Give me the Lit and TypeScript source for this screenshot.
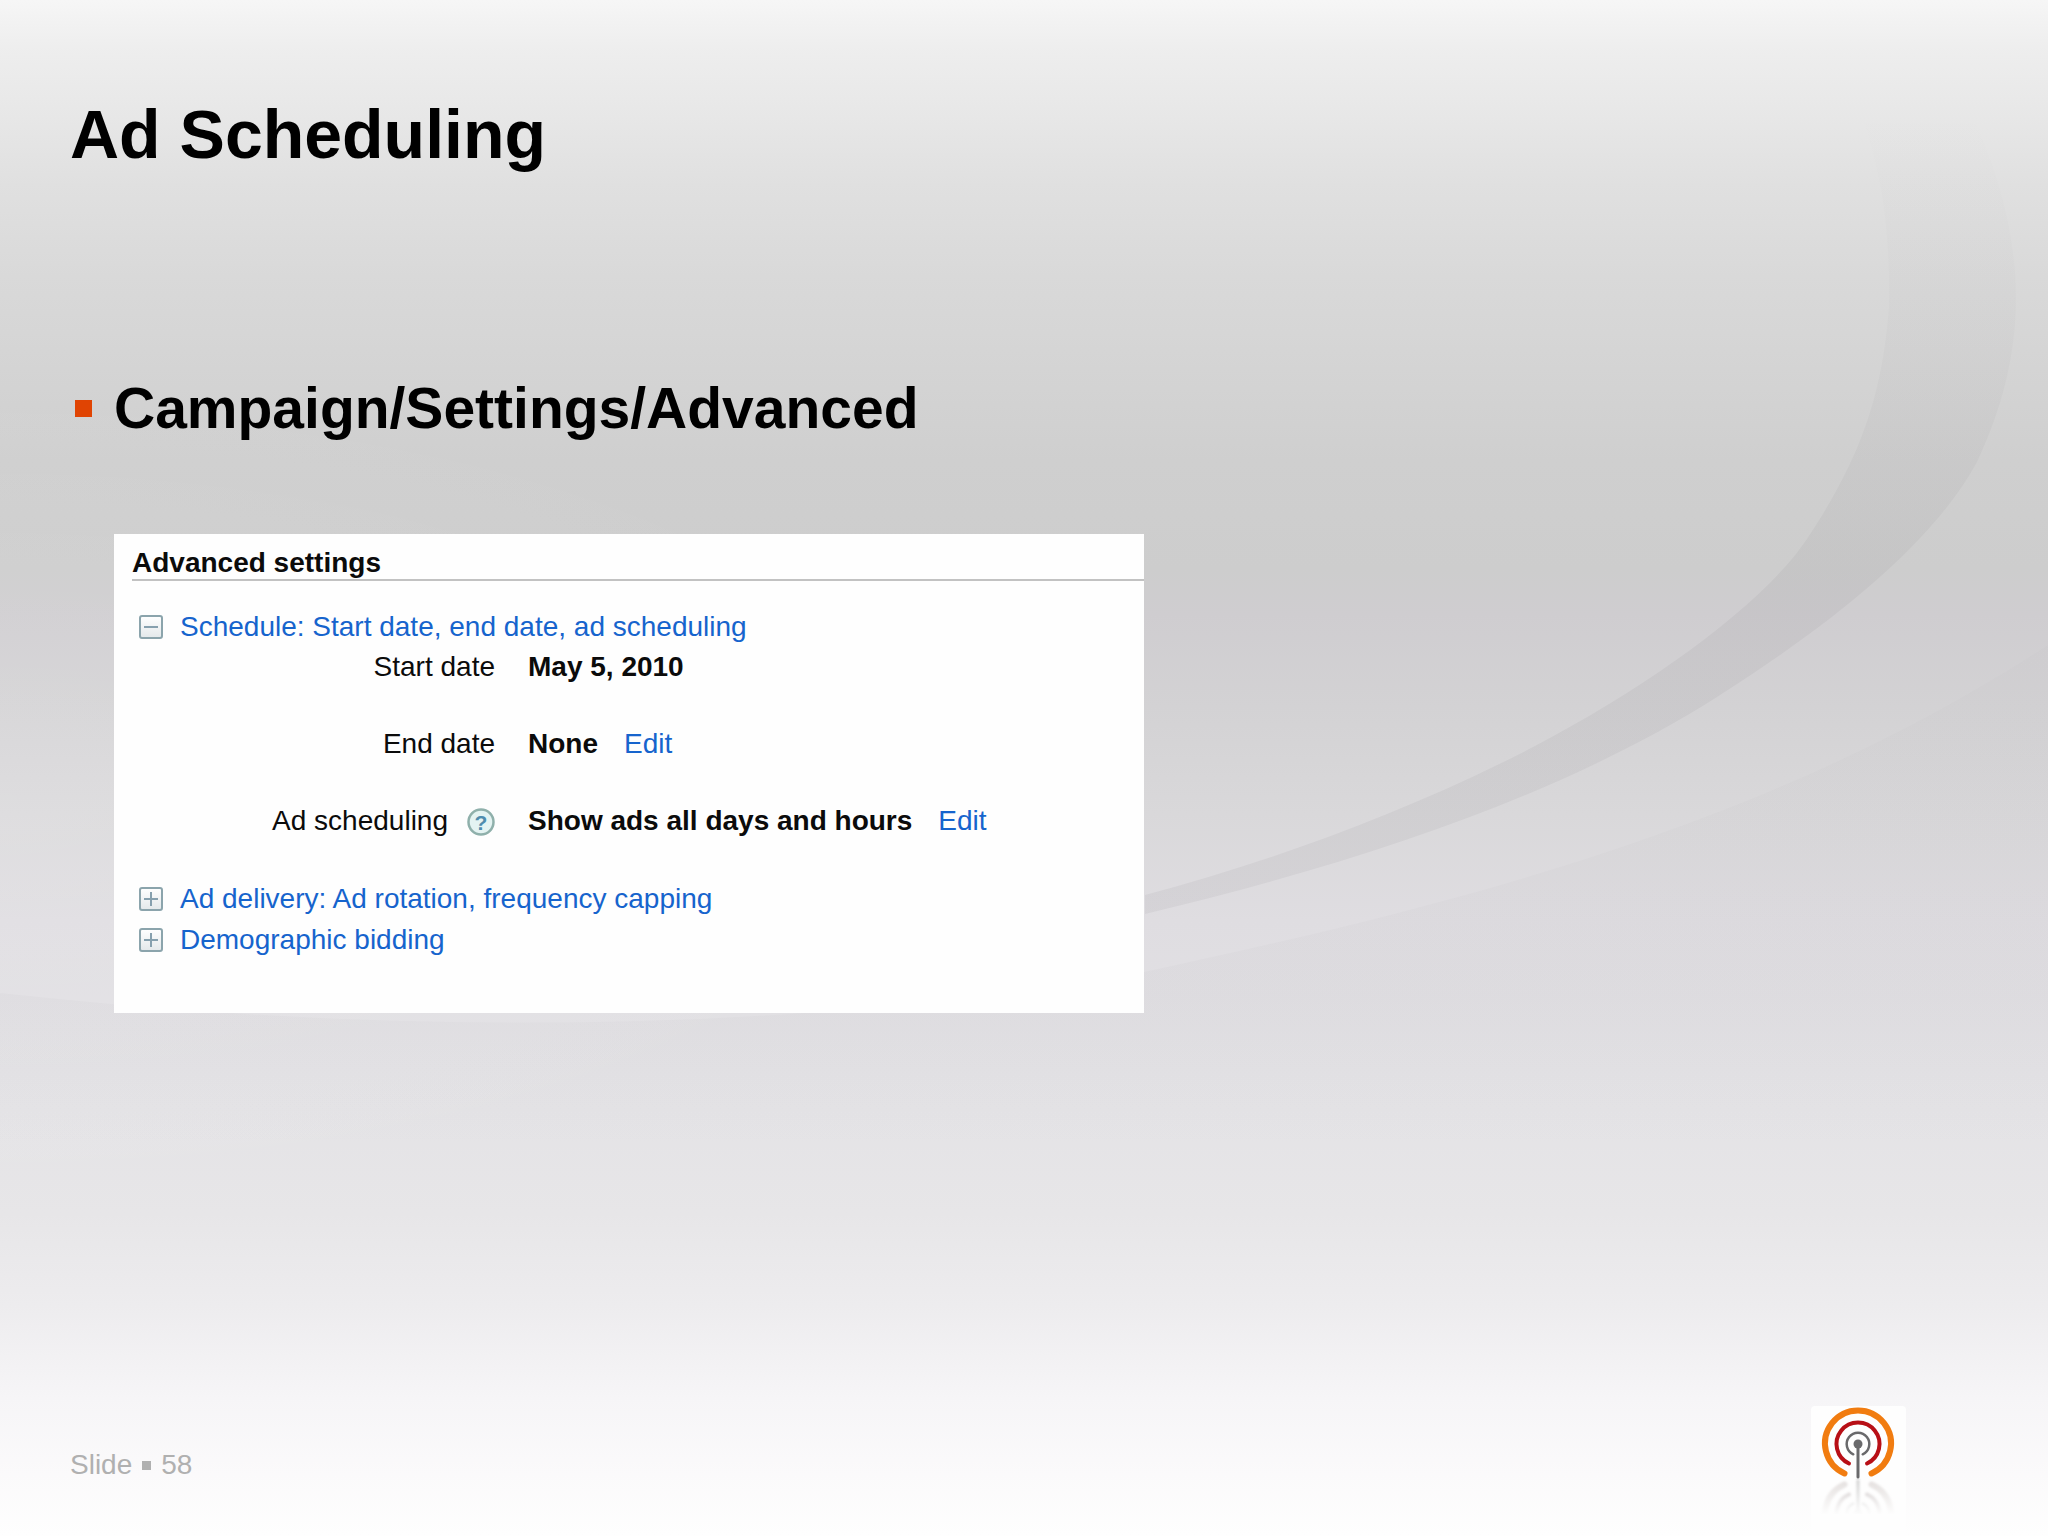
import { LitElement, html, css, svg } from "lit";
import { customElement, property } from "lit/decorators.js";

@customElement("toggle-icon")
class ToggleIcon extends LitElement {
  @property({ type: Boolean }) open = false;

  static styles = css`
    :host { display: block; width: 24px; height: 24px; }
    .icon { display: block; }
  `;

  render() {
    return html`<svg class="icon" width="24" height="24" viewBox="0 0 24 24" aria-hidden="true">
      <defs><linearGradient id="face" x2="0" y2="1">
        <stop stop-color="#fff" /><stop offset="1" stop-color="#e3e8ea" />
      </linearGradient></defs>
      <rect x="1" y="1" width="22" height="22" rx="2" fill="url(#face)" stroke="#8ba4ac" stroke-width="2" />
      <path d="M5 12h14" stroke="#86a0ae" stroke-width="2" />
      ${this.open ? null : svg`<path d="M12 5v14" stroke="#86a0ae" stroke-width="2" />`}
    </svg>`;
  }
}

@customElement("beacon-logo")
class BeaconLogo extends LitElement {
  static styles = css`
    :host { display: block; width: 95px; height: 130px; }
    .logo { display: block; }
  `;

  render() {
    const mark = svg`<g fill="none" stroke-linecap="round">
      <path d="M33.5 67.5A33 33 0 1 1 60.5 67.5" stroke="#f17c10" stroke-width="6" />
      <path d="M38 57.5A21.5 21.5 0 1 1 56 57.5" stroke="#b80f16" stroke-width="4" />
      <path d="M42.3 48.3A11.3 11.3 0 1 1 51.7 48.3" stroke="#69696b" stroke-width="2.5" />
      <path d="M47 38V71" stroke="#69696b" stroke-width="3" />
      <circle cx="47" cy="38" r="4.5" fill="#69696b" />
    </g>`;
    return html`<svg class="logo" width="95" height="130" viewBox="0 0 95 130" role="img" aria-label="Beacon logo">
      <defs>
        <linearGradient id="fade" x2="0" y2="1">
          <stop stop-color="#fefefe" stop-opacity="0.5" /><stop offset="1" stop-color="#fefefe" />
        </linearGradient>
        <filter id="soft"><feGaussianBlur stdDeviation="1" /><feColorMatrix type="saturate" values="0.1" /></filter>
      </defs>
      <rect width="95" height="130" rx="4" fill="#fefefe" />
      ${mark}
      <g transform="translate(0 146) scale(1 -1)" filter="url(#soft)" opacity="0.6">${mark}</g>
      <rect y="74" width="95" height="35" fill="url(#fade)" />
      <rect y="108" width="95" height="22" fill="#fefefe" />
    </svg>`;
  }
}

@customElement("app-root")
class AppRoot extends LitElement {
  static styles = css`
    :host { display: block; font-family: "Liberation Sans", Arial, sans-serif; color: #000; }
    .slide {
      position: relative;
      isolation: isolate;
      box-sizing: border-box;
      min-height: 100vh;
      padding: 94px 142px 0 70px;
      display: flex;
      flex-direction: column;
      background: linear-gradient(#f6f6f6 0%, #eeeeee 3%, #e8e8e8 7%, #e0e0e0 12%, #d9d9d9 18%, #d4d4d4 24%, #cfcfcf 30%, #cdcdcd 37%, #cfcdd0 40%, #d3d2d4 46%, #d9d8da 53%, #dfdde1 60%, #e3e2e5 70%, #e7e6e8 79%, #edecee 85%, #f6f5f7 91%, #fbfafb 96%, #fefefe 100%);
    }
    .backdrop { position: absolute; inset: 0; width: 100%; height: 100%; z-index: -1; }
    .title { margin: 0; font-size: 68px; line-height: 80px; font-weight: 700; }
    .topics { list-style: none; margin: 202px 0 0; padding: 0; }
    .topic { display: flex; align-items: center; gap: 22px; padding-left: 5px; font-size: 57px; line-height: 64px; font-weight: 700; }
    .bullet { width: 17px; height: 17px; background: #e04403; }
    .panel {
      align-self: flex-start;
      box-sizing: border-box;
      width: 1030px;
      max-width: 100%;
      margin: 94px 0 0 44px;
      padding: 12px 0 53px 18px;
      background: #fefefe;
      font-size: 28px;
      line-height: 32px;
      color: #0b0b0b;
    }
    .heading { margin: 0 0 25px; border-bottom: 2px solid #c2c2c2; font-size: 28px; line-height: 33px; font-weight: 700; }
    .section { display: flex; align-items: center; height: 41px; padding-left: 7px; }
    a, .toggle { color: #1664cd; text-decoration: none; }
    .toggle { display: flex; align-items: center; gap: 17px; padding: 0; border: 0; background: none; font: inherit; cursor: pointer; }
    .fields { margin: 0; }
    .field { display: grid; grid-template-columns: 363px 1fr; column-gap: 33px; height: 77px; }
    .term { display: flex; justify-content: flex-end; align-items: flex-start; gap: 19px; padding-top: 4px; }
    .value { display: flex; gap: 26px; margin: 0; padding-top: 4px; }
    .value b { font-weight: 700; }
    .help { padding: 3px 0 0; border: 0; background: none; cursor: pointer; }
    .help svg { display: block; }
    .mark { font: 700 21px "Liberation Sans", Arial, sans-serif; fill: #4f8cae; }
    .footer { display: flex; justify-content: space-between; align-items: flex-start; height: 130px; margin-top: auto; }
    .number { display: flex; align-items: center; gap: 10px; margin: 43px 0 0; font-size: 28px; line-height: 32px; color: #b0b0b0; }
    .dot { width: 9px; height: 9px; background: #b0b0b0; }
  `;

  private section(label: string, open = false) {
    return html`<div class="section"><button class="toggle" aria-expanded=${open}>
      <toggle-icon ?open=${open}></toggle-icon><span>${label}</span>
    </button></div>`;
  }

  private field(label: string, value: string, editable = false, help = false) {
    return html`<div class="field">
      <dt class="term">${label}${help
        ? html`<button class="help" aria-label="About ad scheduling">
            <svg width="28" height="28" viewBox="0 0 28 28">
              <circle cx="14" cy="14" r="12.5" fill="#e4f3f2" stroke="#8fb0ab" stroke-width="2.5" />
              <text class="mark" x="14" y="21.5" text-anchor="middle">?</text>
            </svg></button>`
        : null}</dt>
      <dd class="value"><b>${value}</b>${editable ? html`<a href="#">Edit</a>` : null}</dd>
    </div>`;
  }

  render() {
    return html`<main class="slide">
      <svg class="backdrop" viewBox="0 0 2048 1536" preserveAspectRatio="none" aria-hidden="true">
        <defs>
          <linearGradient id="band" gradientUnits="userSpaceOnUse" x1="0" y1="110" x2="0" y2="900">
            <stop stop-color="#77747a" stop-opacity="0" />
            <stop offset="0.3" stop-color="#77747a" stop-opacity="0.04" />
            <stop offset="0.6" stop-color="#77747a" stop-opacity="0.09" />
            <stop offset="1" stop-color="#77747a" stop-opacity="0.09" />
          </linearGradient>
          <linearGradient id="lower" gradientUnits="userSpaceOnUse" x1="0" y1="640" x2="0" y2="1150">
            <stop stop-color="#77747a" stop-opacity="0.02" />
            <stop offset="0.7" stop-color="#77747a" stop-opacity="0.035" />
            <stop offset="1" stop-color="#77747a" stop-opacity="0" />
          </linearGradient>
          <radialGradient id="glow" gradientUnits="userSpaceOnUse" cx="0" cy="0" r="1" gradientTransform="translate(0 800) scale(1000 420)">
            <stop stop-color="#fff" stop-opacity="0.14" />
            <stop offset="0.5" stop-color="#fff" stop-opacity="0.07" />
            <stop offset="1" stop-color="#fff" stop-opacity="0" />
          </radialGradient>
        </defs>
        <rect width="1100" height="1536" fill="url(#glow)" />
        <path d="M1860 110C1885 180 1890 240 1889 307C1882 400 1858 462 1807 539C1765 602 1655 683 1535 746C1410 811 1270 862 1145 895V914C1380 858 1570 790 1717 697C1860 606 1940 530 1977 462C2030 350 2030 240 1970 110Z" fill="url(#band)" />
        <path d="M0 993C380 1035 780 1036 1144 972C1480 900 1780 820 2048 645V1150H0Z" fill="url(#lower)" />
      </svg>
      <h1 class="title">Ad Scheduling</h1>
      <ul class="topics"><li class="topic"><span class="bullet"></span>Campaign/Settings/Advanced</li></ul>
      <section class="panel">
        <h2 class="heading">Advanced settings</h2>
        ${this.section("Schedule: Start date, end date, ad scheduling", true)}
        <dl class="fields">
          ${this.field("Start date", "May 5, 2010")}
          ${this.field("End date", "None", true)}
          ${this.field("Ad scheduling", "Show ads all days and hours", true, true)}
        </dl>
        ${this.section("Ad delivery: Ad rotation, frequency capping")}
        ${this.section("Demographic bidding")}
      </section>
      <footer class="footer">
        <p class="number"><span>Slide</span><span class="dot"></span><span>58</span></p>
        <beacon-logo></beacon-logo>
      </footer>
    </main>`;
  }
}
